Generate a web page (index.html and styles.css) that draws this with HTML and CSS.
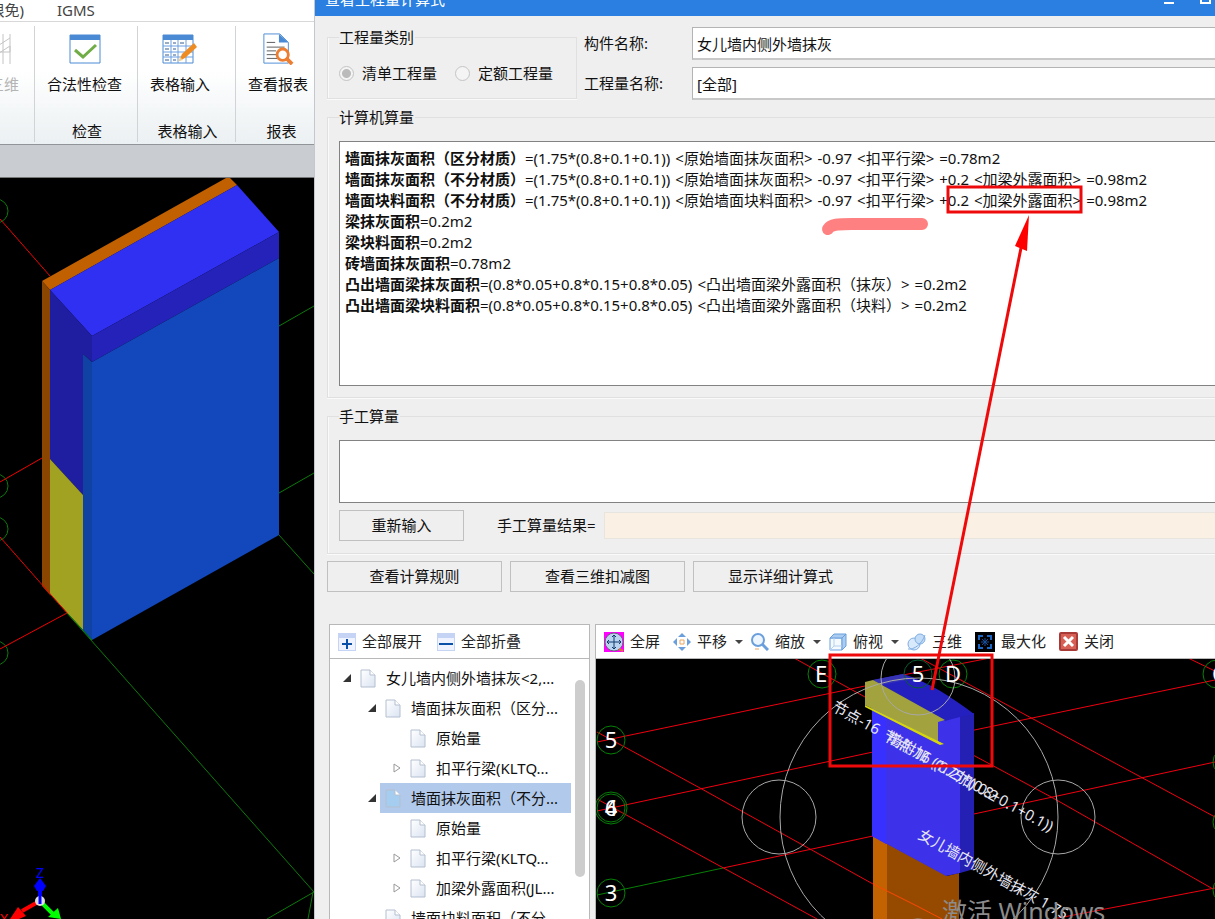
FILE: index.html
```html
<!DOCTYPE html>
<html lang="zh-CN">
<head>
    <meta charset="UTF-8">
    <meta name="viewport" content="width=device-width, initial-scale=1.0">
    <title>查看工程量计算式</title>
    <link rel="stylesheet" href="styles.css">
</head>
<body>
    <main class="app">
        <nav class="tabs">
            <a href="#" class="tab-cut">(限免)</a>
            <a href="#">IGMS</a>
        </nav>
        <div class="ribbon">
            <div class="ribbon-group group-cut">
                <button class="tool" disabled>
                    <svg width="32" height="32" viewBox="0 0 32 32" fill="none" stroke="#c4c4c4"><path d="M22 1v30M8 14l14-9M8 22l14-9v6H8M15 1v30"/></svg>
                    <span>三维</span>
                </button>
            </div>
            <div class="ribbon-group group-check">
                <button class="tool">
                    <svg width="32" height="32" viewBox="0 0 32 32"><path d="M1 2h30v28H1z" fill="#fff" stroke="#4a8ad4"/><path d="M1 2h30v5H1z" fill="#4a8ad4"/><path d="M6 17l8 7 13-12" fill="none" stroke="#70ad47" stroke-width="3"/></svg>
                    <span>合法性检查</span>
                </button>
                <span class="group-name">检查</span>
            </div>
            <div class="ribbon-group group-table">
                <button class="tool">
                    <svg width="36" height="32" viewBox="0 0 36 32"><path d="M1 2h30v28H1z" fill="#fff" stroke="#4a8ad4"/><path d="M1 2h30v5H1z" fill="#4a8ad4"/><path d="M1 13h30M1 19h30M1 24h30M9 7v23M16 7v23M24 7v23" stroke="#6ba0e0" fill="none"/><path d="M3 10h4M11 10h3M18 10h4M3 16h4M11 16h3M3 22h4M11 22h3M3 27h4M11 27h3" stroke="#345a8c"/><path d="M17 28l3-7 12-11 3 4-12 11z" fill="#ed8c23"/><path d="M17 28l1-4 3 3z" fill="#f6d08a"/></svg>
                    <span>表格输入</span>
                </button>
                <span class="group-name">表格输入</span>
            </div>
            <div class="ribbon-group group-report">
                <button class="tool">
                    <svg width="32" height="34" viewBox="0 0 32 34"><path d="M1 1h17l9 9v22H1z" fill="#fff" stroke="#4a8ad4"/><path d="M17 1l10 9H17z" fill="#4a8ad4"/><path d="M4 10h9M4 15h19M4 19h10M4 23h10M4 27h11" stroke="#555"/><circle cx="21" cy="23" r="6" fill="#fff" stroke="#ed7d31" stroke-width="3"/><path d="M25 27l6 6" stroke="#ed7d31" stroke-width="4"/></svg>
                    <span>查看报表</span>
                </button>
                <span class="group-name">报表</span>
            </div>
        </div>
        <div class="strip"></div>
        <svg class="model" viewBox="0 178 314 741" preserveAspectRatio="xMinYMin slice">
            <g fill="none" stroke="#0a7a0a">
                <circle cx="-4" cy="211" r="12"/><circle cx="-4" cy="486" r="12"/><circle cx="-4" cy="529" r="12"/><circle cx="-4" cy="653" r="12"/>
                <path d="M279 326l35-20M279 493l35-20M279 535l35 39M67 613l247 279-47 27M313 892l-5 27"/>
            </g>
            <path d="M42 281L226 178h4l7 7L50 290z" fill="#c06000"/>
            <path d="M42 281l8 9v305l-8-9z" fill="#8a4600"/>
            <path d="M50 290L237 185l42 47L92 336z" fill="#3030f2"/>
            <path d="M92 336l187-104v26L92 362z" fill="#2422b8"/>
            <path d="M50 290l42 46v26l-9-8v141l-33-36z" fill="#201ea0"/>
            <path d="M50 459l33 36v135l-33-36z" fill="#a2a222"/>
            <path d="M83 354l9 8v278l-9-10z" fill="#1042a4"/>
            <path d="M92 362l187-104v277L92 640z" fill="#1248bc"/>
            <path d="M0 219l50 57M0 482l42-24M0 537l67 76M0 649l67-36" stroke="#f00000" fill="none"/>
            <path d="M67 613l25 27" stroke="#0a7a0a"/>
            <g fill="none" stroke-width="4">
                <path d="M40 900V884" stroke="#00f"/><path d="M38 902l-16 9" stroke="#f00"/><path d="M42 903l12 12" stroke="#0f0"/>
            </g>
            <path d="M40 878l6 8-3 5h-6l-3-5z" fill="#00f"/><path d="M10 919l8-12 8 9-7 3z" fill="#f00"/><path d="M48 917l10-9 3 11z" fill="#0f0"/>
            <circle cx="40" cy="901" r="5" fill="#ddd"/><path d="M40 894v10" stroke="#00f" stroke-width="3"/>
            <text x="36" y="878" class="axis-z">Z</text><text x="0" y="924" class="axis-x">X</text>
        </svg>
    </main>

    <section class="dialog">
        <header class="title-bar">
            <h1>查看工程量计算式</h1>
            <button aria-label="最小化"><svg width="12" height="12" viewBox="0 0 12 12"><path d="M1 10h10" stroke="#fff" stroke-width="2"/></svg></button>
            <button aria-label="最大化"><svg width="12" height="12" viewBox="0 0 12 12"><path d="M2 1h9v9H2z" fill="none" stroke="#fff" stroke-width="2"/></svg></button>
        </header>

        <div class="content">
            <div class="top">
                <fieldset class="kind">
                    <legend>工程量类别</legend>
                    <input type="radio" name="kind" id="bill" checked disabled><label for="bill">清单工程量</label>
                    <input type="radio" name="kind" id="quota" disabled><label for="quota">定额工程量</label>
                </fieldset>
                <div class="names">
                    <label for="part">构件名称:</label>
                    <input type="text" id="part" value="女儿墙内侧外墙抹灰">
                    <label for="quantity">工程量名称:</label>
                    <input type="text" id="quantity" value="[全部]">
                </div>
            </div>

            <fieldset class="computed">
                <legend>计算机算量</legend>
                <div class="formulas">
                    <p><b>墙面抹灰面积（区分材质）</b>=(1.75*(0.8+0.1+0.1))<span>&lt;原始墙面抹灰面积&gt;</span>-0.97<span>&lt;扣平行梁&gt;</span>=0.78m2</p>
                    <p><b>墙面抹灰面积（不分材质）</b>=(1.75*(0.8+0.1+0.1))<span>&lt;原始墙面抹灰面积&gt;</span>-0.97<span>&lt;扣平行梁&gt;</span>+0.2<span>&lt;加梁外露面积&gt;</span>=0.98m2</p>
                    <p><b>墙面块料面积（不分材质）</b>=(1.75*(0.8+0.1+0.1))<span>&lt;原始墙面块料面积&gt;</span>-0.97<span>&lt;扣平行梁&gt;</span>+0.2<span>&lt;加梁外露面积&gt;</span>=0.98m2</p>
                    <p><b>梁抹灰面积</b>=0.2m2</p>
                    <p><b>梁块料面积</b>=0.2m2</p>
                    <p><b>砖墙面抹灰面积</b>=0.78m2</p>
                    <p><b>凸出墙面梁抹灰面积</b>=(0.8*0.05+0.8*0.15+0.8*0.05)<span>&lt;凸出墙面梁外露面积（抹灰）&gt;</span>=0.2m2</p>
                    <p><b>凸出墙面梁块料面积</b>=(0.8*0.05+0.8*0.15+0.8*0.05)<span>&lt;凸出墙面梁外露面积（块料）&gt;</span>=0.2m2</p>
                </div>
            </fieldset>

            <fieldset class="manual">
                <legend>手工算量</legend>
                <textarea aria-label="手工算量"></textarea>
                <div class="manual-row">
                    <button class="btn">重新输入</button>
                    <label for="result">手工算量结果=</label>
                    <input type="text" id="result" readonly>
                </div>
            </fieldset>

            <div class="actions">
                <button class="btn">查看计算规则</button>
                <button class="btn">查看三维扣减图</button>
                <button class="btn">显示详细计算式</button>
            </div>

            <div class="panels">
                <div class="tree-panel">
                    <div class="toolbar">
                        <button><svg width="18" height="18" viewBox="0 0 18 18"><path d="M0 0h18v18H0z" fill="#c5d3f5"/><path d="M1 5h16v12H1z" fill="#eef3ff"/><path d="M9 6v10M4 11h10" stroke="#0a50a8" stroke-width="2"/></svg>全部展开</button>
                        <button><svg width="18" height="18" viewBox="0 0 18 18"><path d="M0 0h18v18H0z" fill="#c5d3f5"/><path d="M1 5h16v12H1z" fill="#eef3ff"/><path d="M2 11h14" stroke="#0a50a8" stroke-width="2"/></svg>全部折叠</button>
                    </div>
                    <svg class="defs" width="0" height="0">
                        <linearGradient id="paper" x2="1" y2="1"><stop stop-color="#fff"/><stop offset="1" stop-color="#dbe4f2"/></linearGradient>
                        <symbol id="file" viewBox="0 0 16 19"><path d="M1 1h9l5 5v12H1z" stroke="#b4bfd0"/><path d="M10 1v5h5" fill="#fff" stroke="#b4bfd0"/></symbol>
                        <symbol id="open" viewBox="0 0 8 8"><path d="M8 0v8H0z" fill="#333"/></symbol>
                        <symbol id="closed" viewBox="0 0 8 10"><path d="M1 1l6 4-6 4z" fill="#fff" stroke="#999"/></symbol>
                    </svg>
                    <div class="tree">
                        <ul>
                            <li>
                                <div class="row"><svg class="toggle"><use href="#open"/></svg><a href="#"><svg class="file"><use href="#file"/></svg>女儿墙内侧外墙抹灰&lt;2,...</a></div>
                                <ul>
                                    <li>
                                        <div class="row"><svg class="toggle"><use href="#open"/></svg><a href="#"><svg class="file"><use href="#file"/></svg>墙面抹灰面积（区分...</a></div>
                                        <ul>
                                            <li class="row"><span class="toggle"></span><a href="#"><svg class="file"><use href="#file"/></svg>原始量</a></li>
                                            <li class="row"><svg class="toggle"><use href="#closed"/></svg><a href="#"><svg class="file"><use href="#file"/></svg>扣平行梁(KLTQ...</a></li>
                                        </ul>
                                    </li>
                                    <li>
                                        <div class="row"><svg class="toggle"><use href="#open"/></svg><a href="#" class="selected"><svg class="file"><use href="#file"/></svg>墙面抹灰面积（不分...</a></div>
                                        <ul>
                                            <li class="row"><span class="toggle"></span><a href="#"><svg class="file"><use href="#file"/></svg>原始量</a></li>
                                            <li class="row"><svg class="toggle"><use href="#closed"/></svg><a href="#"><svg class="file"><use href="#file"/></svg>扣平行梁(KLTQ...</a></li>
                                            <li class="row"><svg class="toggle"><use href="#closed"/></svg><a href="#"><svg class="file"><use href="#file"/></svg>加梁外露面积(JL...</a></li>
                                        </ul>
                                    </li>
                                    <li>
                                        <div class="row"><span class="toggle"></span><a href="#"><svg class="file"><use href="#file"/></svg>墙面块料面积（不分...</a></div>
                                    </li>
                                </ul>
                            </li>
                        </ul>
                        <div class="thumb"></div>
                    </div>
                </div>

                <div class="view-panel">
                    <div class="toolbar">
                        <button><svg width="20" height="20" viewBox="0 0 20 20"><path d="M0 0h20v20H0z" fill="#f0f"/><circle cx="10" cy="10" r="9" fill="#b8d4ee" stroke="#667"/><path d="M10 3v14M3 10h14M8 5l2-2 2 2M8 15l2 2 2-2M5 8l-2 2 2 2M15 8l2 2-2 2" stroke="#123a6c" fill="none"/><path d="M15 17l4 2" stroke="#e07030" stroke-width="2"/></svg>全屏</button>
                        <button class="wide"><svg width="18" height="18" viewBox="0 0 18 18"><path d="M9 0l4 4H5zM9 18l4-4H5zM0 9l4-4v8zM18 9l-4-4v8z" fill="#6b9fdc"/><path d="M7 7h4v4H7z" fill="#fff" stroke="#eba560"/></svg>平移<i></i></button>
                        <button class="wide"><svg width="18" height="18" viewBox="0 0 18 18"><circle cx="7" cy="7" r="6" fill="#edf5ff" stroke="#6b9fdc" stroke-width="2"/><path d="M11 11l6 6" stroke="#6b9fdc" stroke-width="3"/><path d="M4 16h4" stroke="#eba560"/></svg>缩放<i></i></button>
                        <button class="wide"><svg width="18" height="18" viewBox="0 0 18 18"><path d="M1 5h12v12H1z" fill="#f5faff" stroke="#6b9fdc"/><path d="M1 5l4-4h12l-4 4zM13 5l4-4v12l-4 4z" fill="#a9ccf0" stroke="#6b9fdc"/><path d="M5 5v8h8M5 13l-4 4" fill="none" stroke="#b5d0f0"/></svg>俯视<i></i></button>
                        <button><svg width="19" height="18" viewBox="0 0 19 18"><circle cx="7" cy="11" r="6" fill="#d8e9fb" stroke="#7faee2"/><circle cx="13" cy="6" r="5" fill="#c3dcf7" stroke="#7faee2"/><path d="M1 16C7 17 15 11 18 2" fill="none" stroke="#7faee2"/></svg>三维</button>
                        <button><svg width="20" height="20" viewBox="0 0 20 20"><path d="M0 0h20v20H0z" fill="#000"/><path d="M4 8V4h4M12 4h4v4M16 12v4h-4M8 16H4v-4" fill="none" stroke="#1c66c4" stroke-width="2"/><path d="M10 6v8M6 10h8M7 7l6 6M13 7l-6 6" stroke="#164f9c"/></svg>最大化</button>
                        <button><svg width="19" height="19" viewBox="0 0 19 19"><rect width="19" height="19" rx="2" fill="#a83a38"/><rect x="2" y="2" width="15" height="15" fill="#d66056"/><path d="M5 5l9 9M14 5l-9 9" stroke="#fff" stroke-width="3"/></svg>关闭</button>
                    </div>
                    <svg class="view" viewBox="596 659 630 260" preserveAspectRatio="xMinYMin slice">
                        <path d="M597 742l268-56M903 675l87-17M597 811l276-59M960 733l255-53M723 868l150-32M960 817l255-55M1053 919l162-31M794 658l71 39M960 748l93 50 160 91M920 658l295 159M1188 658l27 13M597 732l103 56 173 96M597 799l220 120" fill="none" stroke="#ee0010"/>
                        <g fill="none" stroke="#078007">
                            <path d="M597 895l126-27"/>
                            <circle cx="822" cy="674" r="14"/><circle cx="953" cy="674" r="14"/><circle cx="1217" cy="674" r="14"/>
                            <circle cx="611" cy="740" r="14"/><circle cx="611" cy="808" r="14"/><circle cx="611" cy="808" r="16"/><circle cx="611" cy="893" r="14"/>
                            <circle cx="1227" cy="762" r="14"/><circle cx="1227" cy="822" r="14"/><circle cx="1227" cy="890" r="14"/>
                        </g>
                        <path d="M873 836l74 40 12-3v46h-86z" fill="#964a00"/>
                        <path d="M873 836l14 8v75h-14z" fill="#c26200"/>
                        <path d="M873 884l44 22 25 13" fill="none" stroke="#ff4800"/>
                        <path d="M872 706l66 34v-20l22-4v157l-14 3-74-40z" fill="#3d32ea"/>
                        <path d="M872 706l14 8v130l-14-8z" fill="#3830ff"/>
                        <path d="M960 716l14-3v156l-14 4z" fill="#2420b4"/>
                        <path d="M873 680l30-6c26 8 50 24 71 40l-14 3-15 4z" fill="#2420c0"/>
                        <path d="M873 680l30-6 8 5-30 6z" fill="#3634b4"/>
                        <path d="M865 682l8-2 72 40-7 2v20l5 2-78-39z" fill="#a2a23e"/>
                        <path d="M865 705l73 36 6 3-4 1-75-38z" fill="#d6d610"/>
                        <circle cx="918" cy="674" r="14" fill="none" stroke="#075c30"/>
                        <g fill="none" stroke="#a8a8a8">
                            <circle cx="919" cy="817" r="139"/><circle cx="779" cy="817" r="37"/><circle cx="1058" cy="817" r="37"/><circle cx="918" cy="678" r="37"/><circle cx="918" cy="956" r="37"/>
                        </g>
                        <g class="bubble">
                            <text x="821" y="682">E</text><text x="918" y="682">5</text><text x="953" y="682">D</text><text x="1219" y="682">C</text>
                            <text x="611" y="748">5</text><text x="611" y="816">6</text><text x="611" y="816">4</text><text x="611" y="901">3</text>
                        </g>
                        <g class="note">
                            <text transform="translate(831 710) rotate(29)">节点-16</text>
                            <text transform="translate(882 739) rotate(29)">节点-16</text>
                            <text transform="translate(886 741) rotate(29)">墙附加</text>
                            <text transform="translate(930 766) rotate(29)">(1.75*(0.8+0.1+0.1))</text>
                            <text transform="translate(933 768) rotate(29)">(0.2加) 0.2</text>
                            <text transform="translate(917 838) rotate(29)">女儿墙内侧外墙抹灰 1.75</text>
                        </g>
                        <text x="942" y="921" class="watermark">激活 Windows</text>
                    </svg>
                </div>
            </div>
        </div>
    </section>

    <!-- marks drawn over the windows -->
    <svg class="marks" width="1215" height="919">
        <path d="M828 229c3-5 10-5 24-5h70" stroke="#ff8080" stroke-width="12" stroke-linecap="round"/>
        <g stroke="#ee0a0a" stroke-width="3">
            <path d="M948 187h133v25H948z"/>
            <path d="M830 655h162v111H830z"/>
            <path d="M1021 248L932 690"/>
        </g>
        <path d="M1029 215l-2 36-12-5z" fill="#f00"/>
    </svg>
</body>
</html>
```

FILE: styles.css
```css
* {
    box-sizing: border-box;
}
body {
    margin: 0;
    height: 100vh;
    display: flex;
    overflow: hidden;
    position: relative;
    background: #efefef;
    color: #111;
    font-family: "Noto Sans", "Noto Sans CJK SC", sans-serif;
    font-size: 15px;
    line-height: 21px;
}
button, input, textarea {
    font: inherit;
    color: inherit;
}
button {
    background: none;
    border: 0;
    padding: 0;
}
a {
    color: inherit;
    text-decoration: none;
}
svg {
    flex: none;
}

/* main window */
.app {
    width: 314px;
    flex: none;
    display: flex;
    flex-direction: column;
    overflow: hidden;
}
.tabs {
    height: 22px;
    background: #fff;
    border-bottom: 1px solid #d8d8d8;
    display: flex;
    gap: 33px;
    color: #444;
}
.tab-cut {
    width: 24px;
    display: flex;
    justify-content: flex-end;
    white-space: nowrap;
}
.ribbon {
    height: 123px;
    display: flex;
    padding: 4px 0 2px;
    background: linear-gradient(#fff 40%, #ebf0f2);
    border-bottom: 1px solid #929598;
}
.ribbon-group {
    flex: none;
    display: flex;
    flex-direction: column;
    justify-content: space-between;
    padding: 7px 0 0 12px;
    border-right: 1px solid #d0d4d6;
}
.group-cut {
    width: 35px;
    padding: 7px 14px 0 0;
    align-items: flex-end;
}
.group-check {
    width: 103px;
}
.group-table {
    width: 98px;
}
.group-report {
    width: 90px;
}
.tool {
    display: flex;
    flex-direction: column;
    align-items: center;
    align-self: flex-start;
    gap: 9px;
    white-space: nowrap;
}
.tool svg {
    height: 32px;
}
.tool:disabled {
    color: #b4b4b4;
    align-self: flex-end;
}
.group-name {
    text-align: center;
    padding-right: 10px;
}
.strip {
    height: 33px;
    background: #c9ccd1;
    border-bottom: 1px solid #777;
}
.model {
    flex: 1;
    min-height: 0;
    width: 100%;
    background: #000;
}
.axis-z {
    fill: #00f;
    font-size: 14px;
}
.axis-x {
    fill: #f00;
    font-size: 14px;
}

/* dialog */
.dialog {
    flex: 1;
    min-width: 0;
    display: flex;
    flex-direction: column;
    border-left: 1px solid #c4c8cc;
    overflow: hidden;
}
.title-bar {
    flex: none;
    height: 34px;
    margin-top: -18px;
    padding: 0 4px 0 10px;
    display: flex;
    align-items: center;
    gap: 24px;
    background: #2a7fe0;
    color: #fff;
}
.title-bar h1 {
    flex: 1;
    margin: 0;
    font-size: 15px;
    font-weight: 400;
}
.title-bar svg {
    display: block;
}
.content {
    flex: 1;
    min-height: 0;
    display: flex;
    flex-direction: column;
    padding: 11px 0 0 12px;
    margin-right: -12px;
}
fieldset {
    margin: 0;
    padding: 0 12px;
    border: 1px solid #e0e0e0;
    box-shadow: inset 1px 0 #fafafa, 0 1px #fafafa;
    min-width: 0;
}
legend {
    padding: 0 1px 0 0;
}
.top {
    display: flex;
    gap: 7px;
    align-items: flex-start;
}
.kind {
    width: 250px;
    height: 72px;
    display: flex;
    align-items: center;
    padding: 0 0 0 11px;
}
.kind input {
    appearance: none;
    width: 15px;
    height: 15px;
    margin: 0 8px 0 0;
    border: 1px solid #c4c4c4;
    border-radius: 50%;
    background: #f4f4f4;
}
.kind input:checked {
    background: radial-gradient(circle, #bbb 4px, #f4f4f4 5px);
}
.kind label {
    margin-right: 18px;
}
.names {
    flex: 1;
    display: grid;
    grid-template-columns: 108px 1fr;
    row-gap: 7px;
    align-items: center;
}
.names input {
    height: 33px;
    width: 100%;
    padding: 0 4px;
    background: #fff;
    border: 1px solid #b4b4b4;
    border-bottom: 2px solid #c8c8c8;
}
.computed {
    margin-top: 7px;
    height: 291px;
    padding: 13px 0 11px 11px;
}
.formulas {
    height: 245px;
    padding: 6px 5px;
    background: #fff;
    border: 1px solid #828282;
    white-space: nowrap;
}
.formulas p {
    margin: 0;
}
.formulas span {
    margin: 0 5px;
}
.manual {
    margin-top: 8px;
    padding: 13px 0 12px 11px;
}
.manual textarea {
    display: block;
    width: 100%;
    height: 63px;
    background: #fff;
    border: 1px solid #828282;
    resize: none;
}
.manual-row {
    display: flex;
    align-items: center;
    margin-top: 7px;
}
.manual-row .btn {
    width: 125px;
}
.manual-row label {
    margin-left: 33px;
    width: 107px;
}
.manual-row input {
    flex: 1;
    min-width: 0;
    height: 27px;
    background: #faf0e4;
    border: 1px solid #e8e4de;
}
.btn {
    height: 31px;
    border: 1px solid #c0c0c0;
}
.actions {
    display: flex;
    gap: 8px;
    margin-top: 7px;
}
.actions .btn {
    width: 175px;
}
.panels {
    flex: 1;
    min-height: 0;
    display: flex;
    gap: 5px;
    margin-top: 32px;
    padding-left: 2px;
}
.tree-panel, .view-panel {
    display: flex;
    flex-direction: column;
    background: #fff;
    border: 1px solid #b8b8b8;
    border-bottom: 0;
    min-height: 0;
}
.tree-panel {
    width: 261px;
    flex: none;
}
.view-panel {
    flex: 1;
    min-width: 0;
}
.toolbar {
    flex: none;
    height: 34px;
    display: flex;
    align-items: center;
    padding: 0 8px;
    gap: 15px;
    border-bottom: 1px solid #b8b8b8;
    color: #222;
}
.toolbar button {
    display: flex;
    align-items: center;
    gap: 6px;
    white-space: nowrap;
}
.toolbar i {
    border: 4px solid transparent;
    border-top-color: #444;
    border-bottom: 0;
    margin-left: 2px;
}
.view-panel .toolbar {
    gap: 13px;
}
.view-panel .toolbar .wide {
    margin-right: -5px;
}
.defs {
    position: absolute;
}
.tree {
    flex: 1;
    min-height: 0;
    overflow: hidden;
    position: relative;
    padding: 4px 18px 0 13px;
}
.tree ul {
    list-style: none;
    margin: 0;
    padding: 0;
}
.tree ul ul {
    padding-left: 25px;
}
.row {
    display: flex;
    align-items: center;
    height: 30px;
}
.row a {
    flex: 1;
    height: 30px;
    display: flex;
    align-items: center;
    gap: 10px;
    padding-left: 5px;
    white-space: nowrap;
}
.row .selected {
    background: #b1caeb;
}
.toggle {
    width: 8px;
    height: 10px;
    margin-right: 4px;
}
.file {
    width: 16px;
    height: 19px;
    fill: url(#paper);
}
.selected .file {
    fill: #a5cdf0;
}
.thumb {
    position: absolute;
    top: 21px;
    right: 4px;
    width: 10px;
    height: 197px;
    border-radius: 5px;
    background: #cdcdcd;
}
.view {
    flex: 1;
    min-height: 0;
    width: 100%;
    background: #000;
}
.bubble {
    fill: #fff;
    font-size: 22px;
    text-anchor: middle;
}
.note {
    fill: #e8e8f4;
    font-size: 15px;
}
.watermark {
    fill: #8c8c8c;
    font-size: 25px;
}

.marks {
    position: absolute;
    top: 0;
    left: 0;
    fill: none;
    pointer-events: none;
}
```
